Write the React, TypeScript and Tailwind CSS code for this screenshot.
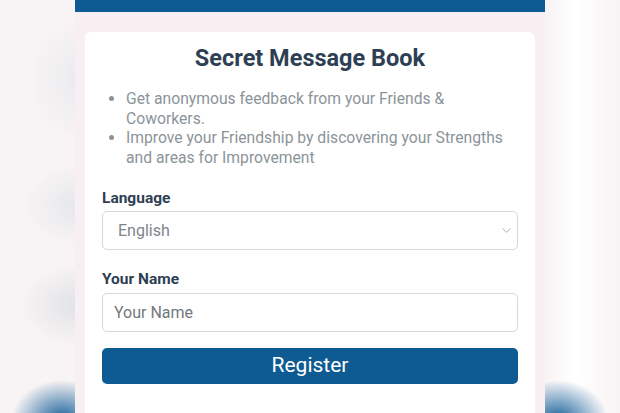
import { ChevronDown } from "lucide-react";

const font = { fontFamily: "Roboto, 'Noto Sans', Arial, sans-serif" };

export default function App() {
  return (
    <div style={font} className="flex h-[413px] w-full overflow-hidden bg-[#f8f3f4]">
      {/* blurred backdrop, left side */}
      <div className="flex-1 bg-[radial-gradient(ellipse_50px_40px_at_62px_420px,#15609a,transparent),radial-gradient(ellipse_55px_60px_at_85px_80px,#e8eaed,transparent),radial-gradient(ellipse_55px_40px_at_80px_205px,#e4e7ea,transparent),radial-gradient(ellipse_60px_40px_at_80px_305px,#dfe2e5,transparent)]" />

      <div className="flex h-full w-[470px] shrink-0 flex-col bg-[#f7eff1]">
        <div className="h-3 shrink-0 bg-[#0d5b92]" />
        <div className="px-[10px] pt-5">
          <div className="rounded-md bg-white px-[17px] pb-10 pt-[12px]">
            <h1 className="text-center text-[23.5px] font-bold leading-[28px] text-[#2e3f54]">
              Secret Message Book
            </h1>
            <ul className="mt-[17px] list-disc pl-6 text-[15.7px] leading-[19.5px] text-[#8b9499] marker:text-[#8b9499]">
              <li>Get anonymous feedback from your Friends &amp; Coworkers.</li>
              <li>Improve your Friendship by discovering your Strengths and areas for Improvement</li>
            </ul>

            <label className="mt-[21px] mb-[3px] block text-[15.5px] font-bold leading-[20px] text-[#2e3f54]">
              Language
            </label>
            <div className="flex h-[39px] items-center justify-between rounded-[5px] border border-[#d6d9db] pl-[15px] pr-[3px] text-[16px] text-[#7d858a]">
              <span>English</span>
              <ChevronDown size={15} strokeWidth={1.3} className="text-[#9aa0a4]" />
            </div>

            <label className="mt-[19px] mb-[4px] block text-[15.5px] font-bold leading-[20px] text-[#2e3f54]">
              Your Name
            </label>
            <input
              type="text"
              placeholder="Your Name"
              className="block h-[39px] w-full rounded-[5px] border border-[#d6d9db] pl-[11px] text-[16px] text-[#333] outline-none placeholder:text-[#72797e]"
            />

            <button
              type="button"
              className="mt-[16px] flex h-[36px] w-full items-center justify-center rounded-[5px] bg-[#0d5b92] text-[21px] text-white"
            >
              Register
            </button>
          </div>
        </div>
      </div>

      {/* blurred backdrop, right side */}
      <div className="flex-1 bg-[radial-gradient(ellipse_50px_40px_at_13px_420px,#15609a,transparent),linear-gradient(to_right,#f8f3f4,#ffffff_40%,#f8f3f4)]" />
    </div>
  );
}
